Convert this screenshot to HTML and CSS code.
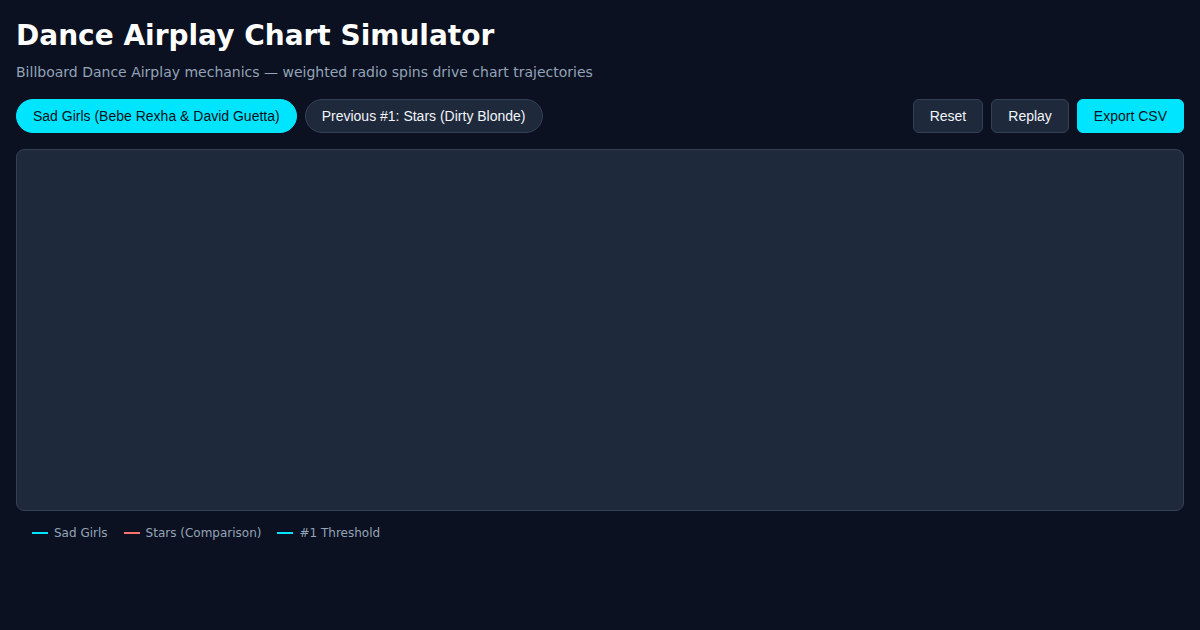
FILE: index.html
```html
<!DOCTYPE html>
<html lang="en">
<head>
<meta charset="utf-8">
<title>Dance Airplay Chart Simulator</title>
<link rel="stylesheet" href="styles.css">
</head>
<body>
<div class="app">
  <header class="header">
    <h1 class="title">Dance Airplay Chart Simulator</h1>
    <p class="subtitle">Billboard Dance Airplay mechanics — weighted radio spins drive chart trajectories</p>
  </header>
  <div class="toolbar">
    <div class="tabs">
      <button class="pill pill-active">Sad Girls (Bebe Rexha &amp; David Guetta)</button>
      <button class="pill">Previous #1: Stars (Dirty Blonde)</button>
    </div>
    <div class="actions">
      <button class="btn">Reset</button>
      <button class="btn">Replay</button>
      <button class="btn btn-primary">Export CSV</button>
    </div>
  </div>
  <div class="chart"></div>
  <div class="legend">
    <span class="legend-item"><span class="swatch swatch-cyan"></span>Sad Girls</span>
    <span class="legend-item"><span class="swatch swatch-red"></span>Stars (Comparison)</span>
    <span class="legend-item"><span class="swatch swatch-cyan"></span>#1 Threshold</span>
  </div>
</div>
</body>
</html>
```

FILE: styles.css
```css
* { box-sizing: border-box; }
html, body { margin: 0; padding: 0; }
body {
  background: #0b1120;
  color: #f1f5f9;
  font-family: "DejaVu Sans", sans-serif;
  width: 1200px;
  height: 630px;
  overflow: hidden;
}
.app {
  padding: 16px;
  display: flex;
  flex-direction: column;
}
.header { margin-bottom: 18px; }
.title {
  margin: 3px 0 0;
  font-size: 28px;
  font-weight: bold;
  line-height: 34px;
  color: #ffffff;
}
.subtitle {
  margin: 10px 0 0;
  font-size: 14px;
  line-height: 18px;
  color: #94a3b8;
}
.toolbar {
  display: flex;
  justify-content: space-between;
  align-items: center;
  margin-bottom: 16px;
}
.tabs, .actions { display: flex; gap: 8px; }
button {
  font-family: "Liberation Sans", Arial, sans-serif;
  font-size: 14px;
  height: 34px;
  line-height: 16px;
  padding: 8px 16px;
  cursor: pointer;
}
.pill {
  border-radius: 999px;
  border: 1px solid #334155;
  background: #1e293b;
  color: #f1f5f9;
}
.pill-active {
  background: #00e5ff;
  border-color: #00e5ff;
  color: #0b1120;
}
.btn {
  border-radius: 6px;
  border: 1px solid #334155;
  background: #1e293b;
  color: #f1f5f9;
}
.btn-primary {
  background: #00e5ff;
  border-color: #00e5ff;
  color: #0b1120;
}
.chart {
  height: 362px;
  background: #1e293b;
  border: 1px solid #334155;
  border-radius: 8px;
}
.legend {
  display: flex;
  gap: 16px;
  padding: 14px 16px 0;
  font-size: 12px;
  line-height: 16px;
  color: #94a3b8;
}
.legend-item { display: flex; align-items: center; gap: 6px; }
.swatch { width: 16px; height: 2px; display: inline-block; }
.swatch-cyan { background: #00e5ff; }
.swatch-red { background: #f87171; }
```
